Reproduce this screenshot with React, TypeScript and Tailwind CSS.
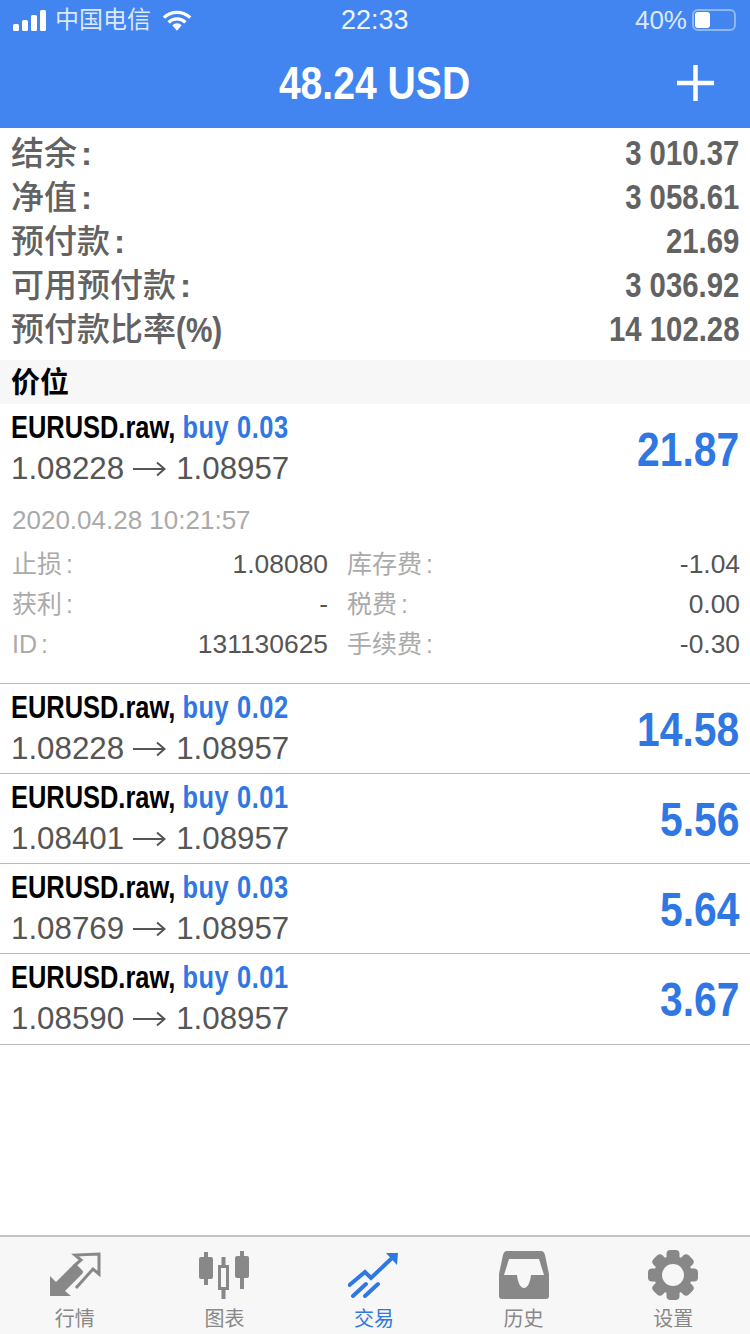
const summary = [
  ['结余', ':', '3 010.37'],
  ['净值', ':', '3 058.61'],
  ['预付款', ':', '21.69'],
  ['可用预付款', ':', '3 036.92'],
  ['预付款比率', '(%)', '14 102.28'],
];

const details = [
  ['止损', '1.08080', '库存费', '-1.04'],
  ['获利', '-', '税费', '0.00'],
  ['ID', '131130625', '手续费', '-0.30'],
];

const positions = [
  { lot: 'buy 0.02', open: '1.08228', profit: '14.58' },
  { lot: 'buy 0.01', open: '1.08401', profit: '5.56' },
  { lot: 'buy 0.03', open: '1.08769', profit: '5.64' },
  { lot: 'buy 0.01', open: '1.08590', profit: '3.67' },
];

// no condensed bold font is installed, so the bold latin text is squeezed
const PositionHead = ({ lot, open, profit }: { lot: string; open: string; profit: string }) => (
  <div className="flex h-full items-center justify-between pr-[11px] pl-[11px]">
    <div className="-mt-[1px] min-w-0">
      <div className="h-[40px] origin-left scale-x-[0.82] text-[31px] leading-[40px] font-bold whitespace-nowrap text-black">
        EURUSD.raw, <span className="tracking-[0.7px] text-[#2f78e4]">{lot}</span>
      </div>
      <div className="flex h-[41px] items-center text-[31.3px] leading-[41px] text-[#555]">
        {open}
        <svg className="mt-[1px] mr-[10px] ml-[9px]" width="33" height="16" viewBox="0 0 33 16">
          <path d="M0 8h31M24 1.5 31.5 8 24 14.5" fill="none" stroke="#555" strokeWidth="2" />
        </svg>
        1.08957
      </div>
    </div>
    <div className="mt-[2px] origin-right scale-x-[0.85] text-[48px] leading-none font-bold text-[#2f78e4]">{profit}</div>
  </div>
);

const gearTeeth = [0, 45, 90, 135, 180, 225, 270, 315];

const tabs = [
  {
    label: '行情',
    icon: (
      <svg width="52" height="46" viewBox="0 0 52 46">
        <path d="M1 24l6 6L24 13q2-2 4 0l5 5q2 2 0 4L16 39l6 5H1z" fill="#888" />
        <path d="M25 14l7-6-6-5 24-1v20l-6-5-17 19" fill="none" stroke="#888" strokeWidth="3" />
      </svg>
    ),
  },
  {
    label: '图表',
    icon: (
      <svg width="50" height="48" viewBox="0 0 50 48" fill="#888">
        <path d="M5 1h4v5h3q2 0 2 2v18q0 2-2 2H9v6H5v-6H2q-2 0-2-2V8q0-2 2-2h3z" />
        <path d="M41 0h4v5h3q2 0 2 2v18q0 2-2 2h-3v11h-4V27h-3q-2 0-2-2V7q0-2 2-2h3z" />
        <path fillRule="evenodd" d="M22.5 6h4v8H30v25h-3.500v9h-4v-9H19V14h3.500zM22 17v19h5V17z" />
      </svg>
    ),
  },
  {
    label: '交易',
    active: true,
    icon: (
      <svg width="52" height="46" viewBox="0 0 52 46">
        <path d="M1.500 33 17 20l6 6 20-19M5 44l13-12M17 44l13-12" fill="none" stroke="#2f78e4" strokeWidth="4" strokeLinecap="round" />
        <path d="M38 1h12l-1 12z" fill="#2f78e4" />
      </svg>
    ),
  },
  {
    label: '历史',
    icon: (
      <svg width="50" height="48" viewBox="0 0 50 48">
        <path
          fillRule="evenodd"
          fill="#888"
          d="M8 0h34q3 0 4 4l4 19v22q0 3-3 3H3q-3 0-3-3V23L4 4q1-4 4-4zm2 8L5 24h13c1 9 4 13 7 13s6-4 7-13h13L40 8z"
        />
      </svg>
    ),
  },
  {
    label: '设置',
    icon: (
      <svg width="50" height="50" viewBox="0 0 50 50">
        <circle cx="25" cy="25" r="19" fill="#888" />
        {gearTeeth.map((deg) => (
          <rect key={deg} x="18.500" y="0" width="13" height="12" rx="4" fill="#888" transform={`rotate(${deg} 25 25)`} />
        ))}
        <circle cx="25" cy="25" r="11" fill="#f7f7f7" />
      </svg>
    ),
  },
];

export default function App() {
  return (
    <div className="flex h-[1334px] w-[750px] flex-col overflow-hidden bg-white font-['Liberation_Sans','Noto_Sans_CJK_SC',sans-serif]">
      <header className="h-[128px] shrink-0 bg-[#4285f1] text-white">
        <div className="relative flex h-[40px] items-center justify-between pr-[14px] pl-[13px] text-[26px]">
          <div className="flex items-center">
            <svg width="34" height="21" viewBox="0 0 34 21" fill="#fff">
              <rect x="0" y="14" width="6" height="7" rx="1.500" />
              <rect x="9" y="10" width="6" height="11" rx="1.500" />
              <rect x="18" y="5" width="6" height="16" rx="1.500" />
              <rect x="27" y="0" width="6" height="21" rx="1.500" />
            </svg>
            <span className="ml-[8px] text-[24px] text-[#dce8fb]">中国电信</span>
            <svg className="ml-[11px]" width="30" height="21" viewBox="0 0 32 22">
              <path d="M2 8a20 20 0 0 1 28 0M7 13a13 13 0 0 1 18 0" fill="none" stroke="#fff" strokeWidth="3.500" />
              <path d="M11 16a7 7 0 0 1 10 0l-5 6z" fill="#fff" />
            </svg>
          </div>
          <span className="absolute left-[341px] text-[27px] text-[#eef4fe]">22:33</span>
          <div className="flex items-center">
            <span className="text-[#dce8fb]">40%</span>
            <div className="ml-[5px] flex h-[22px] w-[44px] items-center rounded-[6px] border-2 border-[#8fb6f5] p-[1px]">
              <div className="h-[16px] w-[15px] rounded-[3px] bg-white" />
            </div>
          </div>
        </div>
        <div className="relative flex h-[88px] items-center justify-center">
          <span className="-mt-[1px] scale-x-[0.85] text-[46px] font-bold whitespace-nowrap">48.24 USD</span>
          <svg className="absolute top-[25px] right-[36px]" width="37" height="36" viewBox="0 0 37 36">
            <path d="M18.500 0v36M0 18h37" stroke="#fff" strokeWidth="4.500" />
          </svg>
        </div>
      </header>

      <section className="pt-[4px] pb-[8px]">
        {summary.map(([label, suffix, value]) => (
          <div key={label} className="flex h-[44px] items-center justify-between pr-[11px] pl-[11px] text-[#626262]">
            <span className="flex items-center text-[33px] font-medium">
              {label}
              {suffix === ':' ? (
                <span className="ml-[4px] font-bold">:</span>
              ) : (
                <span className="origin-left scale-x-[0.85] text-[35px] font-bold">{suffix}</span>
              )}
            </span>
            <span className="origin-right scale-x-[0.85] text-[34.500px] font-bold whitespace-nowrap">{value}</span>
          </div>
        ))}
      </section>

      <div className="flex h-[44px] items-center bg-[#f7f7f7] pt-[4px] pl-[11px] text-[29px] font-semibold text-black">价位</div>

      <section>
        <div className="h-[280px] border-b border-[#bbb]">
          <div className="h-[90px]">
            <PositionHead lot="buy 0.03" open="1.08228" profit="21.87" />
          </div>
          <div className="mt-[6px] pl-[12px] text-[26px] leading-[40px] text-[#aaa]">2020.04.28 10:21:57</div>
          <div className="mt-[5px] pr-[10px] pl-[12px]">
            {details.map(([l1, v1, l2, v2]) => (
              <div key={l1} className="flex h-[40px] items-center text-[26.400px]">
                <span className="w-[100px] text-[25px] text-[#aaa]">
                  {l1}
                  <span className="ml-[4px]">:</span>
                </span>
                <span className="w-[216px] text-right text-[#555]">{v1}</span>
                <span className="ml-[19px] text-[25px] text-[#aaa]">
                  {l2}
                  <span className="ml-[4px]">:</span>
                </span>
                <span className="flex-1 text-right text-[#555]">{v2}</span>
              </div>
            ))}
          </div>
        </div>
        {positions.map((p, i) => (
          <div key={i} className={`border-b border-[#bbb] ${i === 3 ? 'h-[91px]' : 'h-[90px]'}`}>
            <PositionHead {...p} />
          </div>
        ))}
      </section>

      <div className="flex-1" />

      <nav className="flex h-[99px] shrink-0 border-t-2 border-[#c4c4c4] bg-[#f7f7f7] pr-[2px]">
        {tabs.map((t) => (
          <div key={t.label} className="flex flex-1 flex-col items-center pt-[12px]">
            <div className="flex h-[52px] items-center">{t.icon}</div>
            <span className={`mt-[4px] text-[20px] leading-[28px] ${t.active ? 'text-[#2f78e4]' : 'text-[#888]'}`}>{t.label}</span>
          </div>
        ))}
      </nav>
    </div>
  );
}
